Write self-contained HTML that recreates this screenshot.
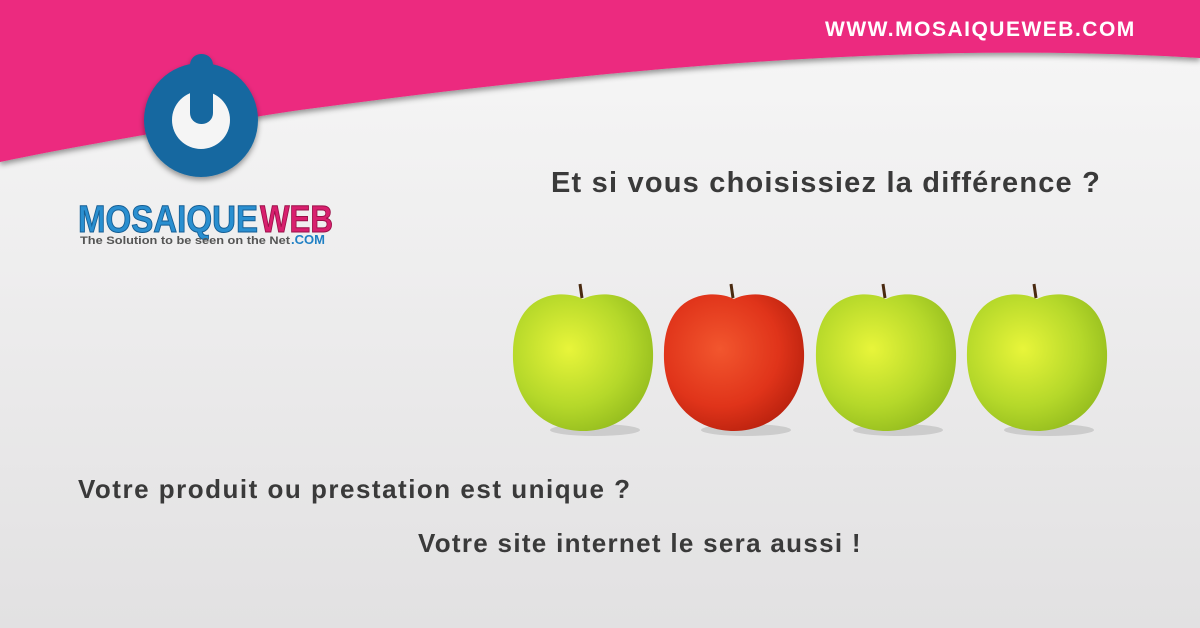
<!DOCTYPE html>
<html><head><meta charset="utf-8"><style>
html,body{margin:0;padding:0}
body{width:1200px;height:628px;position:relative;overflow:hidden;background:linear-gradient(#f7f7f7,#e2e1e2);font-family:"Liberation Sans",sans-serif}
.t{position:absolute;font-weight:bold;color:#3a3a3a;white-space:nowrap}
</style></head><body>
<svg width="1200" height="628" style="position:absolute;left:0;top:0">
<defs>
<radialGradient id="g" cx="0.4" cy="0.4" r="0.7"><stop offset="0" stop-color="#e8f53a"/><stop offset="0.6" stop-color="#b5d82a"/><stop offset="1" stop-color="#8fb81c"/></radialGradient>
<radialGradient id="r" cx="0.4" cy="0.4" r="0.7"><stop offset="0" stop-color="#f2562e"/><stop offset="0.6" stop-color="#e0341a"/><stop offset="1" stop-color="#b31e0c"/></radialGradient>
<filter id="s"><feDropShadow dx="0" dy="3" stdDeviation="3" flood-opacity="0.4"/></filter>
<path id="a" d="M0 -62C-20 -72 -68 -70 -70 -10C-72 40 -40 70 0 70C40 70 72 40 70 -10C68 -70 20 -72 0 -62Z"/>
</defs>
<path d="M0 0H1200V58C900 40 600 70 300 110C200 125 80 145 0 162Z" fill="#ec2a7f" filter="url(#s)"/>
<g filter="url(#s)">
<circle cx="201" cy="120" r="57" fill="#1768a0"/>
<circle cx="201" cy="120" r="29" fill="#f5f5f5"/>
<rect x="190" y="54" width="23" height="70" rx="11" fill="#1768a0"/>
</g>
<ellipse cx="595" cy="430" rx="45" ry="6" fill="#ccc"/>
<ellipse cx="746" cy="430" rx="45" ry="6" fill="#ccc"/>
<ellipse cx="898" cy="430" rx="45" ry="6" fill="#ccc"/>
<ellipse cx="1049" cy="430" rx="45" ry="6" fill="#ccc"/>
<use href="#a" x="583" y="361" fill="url(#g)"/>
<use href="#a" x="734" y="361" fill="url(#r)"/>
<use href="#a" x="886" y="361" fill="url(#g)"/>
<use href="#a" x="1037" y="361" fill="url(#g)"/>
<g stroke="#4a2a10" stroke-width="3"><line x1="580" y1="284" x2="582" y2="298"/><line x1="731" y1="284" x2="733" y2="298"/><line x1="883" y1="284" x2="885" y2="298"/><line x1="1034" y1="284" x2="1036" y2="298"/></g>
<text x="78" y="232" font-family="Liberation Sans" font-weight="bold" font-size="38" fill="#2a8fd0" stroke="#155e94" stroke-width="1" textLength="180" lengthAdjust="spacingAndGlyphs">MOSAIQUE</text>
<text x="260" y="232" font-family="Liberation Sans" font-weight="bold" font-size="38" fill="#d81f6e" stroke="#9a1048" stroke-width="1" textLength="73" lengthAdjust="spacingAndGlyphs">WEB</text>
<text x="80" y="244" font-family="Liberation Sans" font-weight="bold" font-size="11" fill="#555" textLength="210" lengthAdjust="spacingAndGlyphs">The Solution to be seen on the Net</text>
<text x="291" y="244" font-family="Liberation Sans" font-weight="bold" font-size="13" fill="#1f7fc4">.COM</text>
</svg>
<div class="t" style="left:825px;top:18px;font-size:21px;letter-spacing:1.5px;color:#fff">WWW.MOSAIQUEWEB.COM</div>
<div class="t" style="left:551px;top:167px;font-size:29px;letter-spacing:1.2px">Et si vous choisissiez la différence ?</div>
<div class="t" style="left:78px;top:474px;font-size:26px;letter-spacing:1.5px">Votre produit ou prestation est unique ?</div>
<div class="t" style="left:418px;top:528px;font-size:26px;letter-spacing:1.3px">Votre site internet le sera aussi !</div>
</body></html>
